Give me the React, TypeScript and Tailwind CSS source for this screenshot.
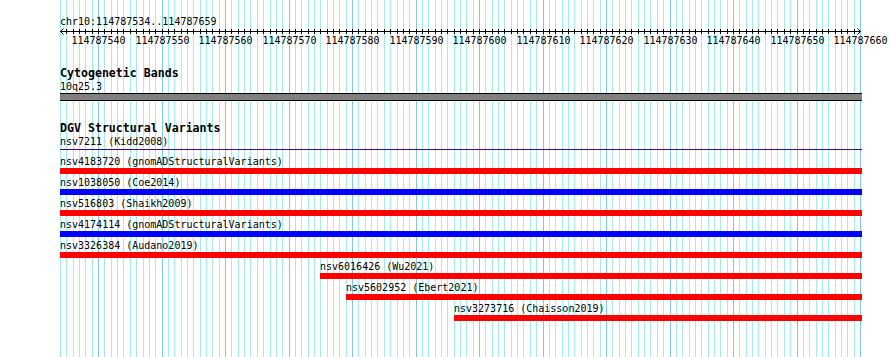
import React from 'react';

const START = 114787534;
const SPAN = 126;
const LEFT = 60;
const SCALE = 800 / SPAN;

type Variant = { id: string; source: string; color: string; offset: number };

const VARIANTS: Variant[] = [
  { id: 'nsv4183720', source: 'gnomADStructuralVariants', color: 'bg-[#ff0000]', offset: 0 },
  { id: 'nsv1038050', source: 'Coe2014', color: 'bg-[#0000ff]', offset: 0 },
  { id: 'nsv516803', source: 'Shaikh2009', color: 'bg-[#ff0000]', offset: 0 },
  { id: 'nsv4174114', source: 'gnomADStructuralVariants', color: 'bg-[#0000ff]', offset: 0 },
  { id: 'nsv3326384', source: 'Audano2019', color: 'bg-[#ff0000]', offset: 0 },
  { id: 'nsv6016426', source: 'Wu2021', color: 'bg-[#ff0000]', offset: 260 },
  { id: 'nsv5602952', source: 'Ebert2021', color: 'bg-[#ff0000]', offset: 286 },
  { id: 'nsv3273716', source: 'Chaisson2019', color: 'bg-[#ff0000]', offset: 394 },
];

const xAt = (i: number) => Math.round(LEFT + i * SCALE) + 0.5;

const GridAndRuler: React.FC = () => {
  const ticks = Array.from({ length: SPAN + 1 }, (_, i) => i);
  return (
    <svg className="absolute inset-0" width={890} height={357} shapeRendering="crispEdges">
      {ticks.map((i) => {
        const major = (START + i) % 10 === 0;
        return (
          <line
            key={`g${i}`}
            x1={xAt(i)}
            x2={xAt(i)}
            y1={0}
            y2={357}
            stroke={major ? '#82c6ea' : '#a2ecf0'}
            strokeWidth={1}
          />
        );
      })}
      {/* ruler */}
      <line x1={LEFT} x2={860} y1={31.5} y2={31.5} stroke="#000" />
      {ticks.slice(1, SPAN).map((i) => (
        <line key={`t${i}`} x1={xAt(i)} x2={xAt(i)} y1={29} y2={34} stroke="#000" />
      ))}
      <path d="M60.5 31.5 L63.5 28.5 M60.5 31.5 L63.5 34.5" stroke="#000" shapeRendering="auto" fill="none" />
      <path d="M860.5 31.5 L857.5 28.5 M860.5 31.5 L857.5 34.5" stroke="#000" shapeRendering="auto" fill="none" />
      {ticks
        .filter((i) => (START + i) % 10 === 0)
        .map((i) => (
          <text
            key={`l${i}`}
            x={xAt(i)}
            y={44}
            textAnchor="middle"
            fontSize={10}
            fontFamily="'DejaVu Sans Mono', monospace"
            fill="#000"
          >
            {START + i}
          </text>
        ))}
    </svg>
  );
};

const App: React.FC = () => {
  return (
    <div className="relative w-[890px] h-[357px] overflow-hidden bg-white text-black font-['DejaVu_Sans_Mono',monospace]">
      <GridAndRuler />
      <div className="relative pt-[15px] pl-[60px]">
        <div className="h-[13px] text-[10px] leading-[13px] whitespace-pre">chr10:114787534..114787659</div>
        <div className="h-[39px]"></div>

        <div className="h-[13px] text-[11.6px] leading-[13px] font-bold whitespace-pre">Cytogenetic Bands</div>
        <div className="h-[13px] text-[10px] leading-[13px]">10q25.3</div>
        <div className="w-[802px] h-[8px] border-y border-black bg-[#808080]"></div>

        <div className="mt-[21px] h-[13px] text-[11.6px] leading-[13px] font-bold whitespace-pre">DGV Structural Variants</div>
        <div className="h-[13px] text-[10px] leading-[13px] whitespace-pre">nsv7211 (Kidd2008)</div>
        <div className="mt-px w-[802px] h-px bg-[#3c0a78]"></div>

        <div className="mt-[5px] flex flex-col">
          {VARIANTS.map((v) => (
            <div key={v.id} className="mb-[2px]" style={{ marginLeft: v.offset }}>
              <div className="h-[13px] text-[10px] leading-[13px] whitespace-pre">{`${v.id} (${v.source})`}</div>
              <div className={`h-[6px] ${v.color}`} style={{ width: 802 - v.offset }}></div>
            </div>
          ))}
        </div>
      </div>
    </div>
  );
};

export default App;
